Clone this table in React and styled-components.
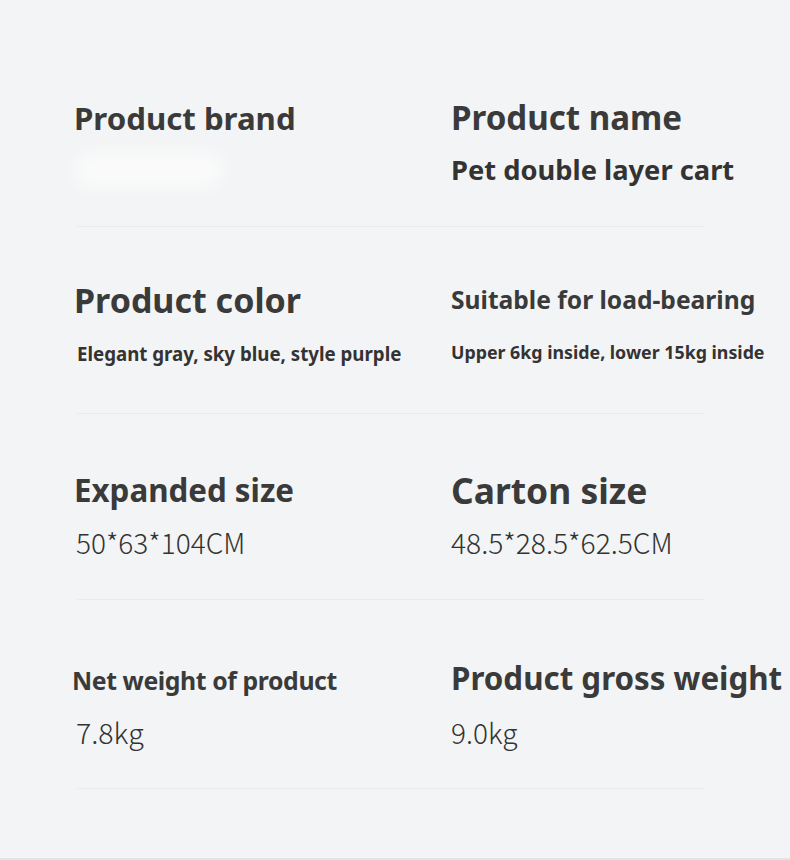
import React from "react";
import styled, { createGlobalStyle } from "styled-components";

const Global = createGlobalStyle`
  html, body { margin: 0; padding: 0; background: #f3f4f5; }
  body { font-family: "Noto Sans", "Open Sans", sans-serif; }
`;

const Sheet = styled.main`
  width: 790px;
  height: 860px;
  box-sizing: border-box;
  padding-top: 40px;
  display: flex;
  flex-direction: column;
  background: #f3f4f5;
  border-bottom: 2px solid #dfe5ea;
  overflow: hidden;
`;

const Row = styled.section`
  display: grid;
  grid-template-columns: 377px 1fr;
  padding-left: 74px;
  height: ${(p) => p.$h}px;
  box-sizing: border-box;
`;

const Divider = styled.hr`
  margin: 0 0 0 77px;
  width: 628px;
  height: 1px;
  border: none;
  background: #e7eaee;
`;

const Cell = styled.div`
  display: flex;
  flex-direction: column;
  align-items: flex-start;
  padding-top: ${(p) => p.$t - 20}px;
`;

const Title = styled.h2`
  margin: 0 0 0 ${(p) => p.$indent || 0}px;
  height: 40px;
  line-height: 40px;
  font-family: "Noto Sans", sans-serif;
  font-weight: 700;
  font-size: ${(p) => p.$size}px;
  color: #3a3a3a;
  white-space: nowrap;
  letter-spacing: ${(p) => p.$ls || 0}px;
`;

const Value = styled.p`
  margin: ${(p) => p.$gap}px 0 0 ${(p) => p.$indent || 0}px;
  height: 40px;
  line-height: 40px;
  font-family: ${(p) =>
    p.$thin ? '"Noto Sans CJK SC", "Noto Sans", sans-serif' : '"Noto Sans", sans-serif'};
  font-weight: ${(p) => (p.$thin ? 300 : 700)};
  font-size: ${(p) => p.$size}px;
  color: #333;
  white-space: nowrap;
  letter-spacing: ${(p) => p.$ls || 0}px;
`;

const BrandBlur = styled.div`
  margin: ${(p) => p.$gap + 2}px 0 0 0;
  width: 150px;
  height: 36px;
  border-radius: 18px;
  background: rgba(255, 255, 255, 0.6);
  filter: blur(9px);
`;

const rows = [
  {
    h: 186,
    cells: [
      { t: 78, v: 130, title: "Product brand", ts: 31.2, brand: true },
      { t: 78, v: 130, title: "Product name", ts: 33.1, value: "Pet double layer cart", vs: 27.3 },
    ],
  },
  {
    h: 186,
    cells: [
      { t: 73, v: 127, title: "Product color", ts: 34, value: "Elegant gray, sky blue, style purple", vs: 18.7, vi: 3 },
      { t: 73, v: 125, title: "Suitable for load-bearing", ts: 24.6, value: "Upper 6kg inside, lower 15kg inside", vs: 17.8 },
    ],
  },
  {
    h: 185,
    cells: [
      { t: 76, v: 128, title: "Expanded size", ts: 31.3, value: "50*63*104CM", vs: 28, thin: true, vi: 2 },
      { t: 76, v: 128, title: "Carton size", ts: 35.4, value: "48.5*28.5*62.5CM", vs: 28.2, thin: true },
    ],
  },
  {
    h: 188,
    cells: [
      { t: 80, v: 132, title: "Net weight of product", ts: 24.8, tls: -0.4, ti: -2, value: "7.8kg", vs: 28.5, thin: true, vi: 2 },
      { t: 78, v: 132, title: "Product gross weight", ts: 31.3, value: "9.0kg", vs: 28, thin: true },
    ],
  },
];

export default function App() {
  return (
    <>
      <Global />
      <Sheet>
        {rows.map((r, i) => (
          <React.Fragment key={i}>
            <Row $h={r.h}>
              {r.cells.map((c, j) => (
                <Cell key={j} $t={c.t}>
                  <Title $size={c.ts} $ls={c.tls} $indent={c.ti}>
                    {c.title}
                  </Title>
                  {c.brand ? (
                    <BrandBlur $gap={c.v - c.t - 40} />
                  ) : (
                    <Value
                      $gap={c.v - c.t - 40}
                      $size={c.vs}
                      $thin={c.thin}
                      $indent={c.vi}
                    >
                      {c.value}
                    </Value>
                  )}
                </Cell>
              ))}
            </Row>
            <Divider />
          </React.Fragment>
        ))}
      </Sheet>
    </>
  );
}
